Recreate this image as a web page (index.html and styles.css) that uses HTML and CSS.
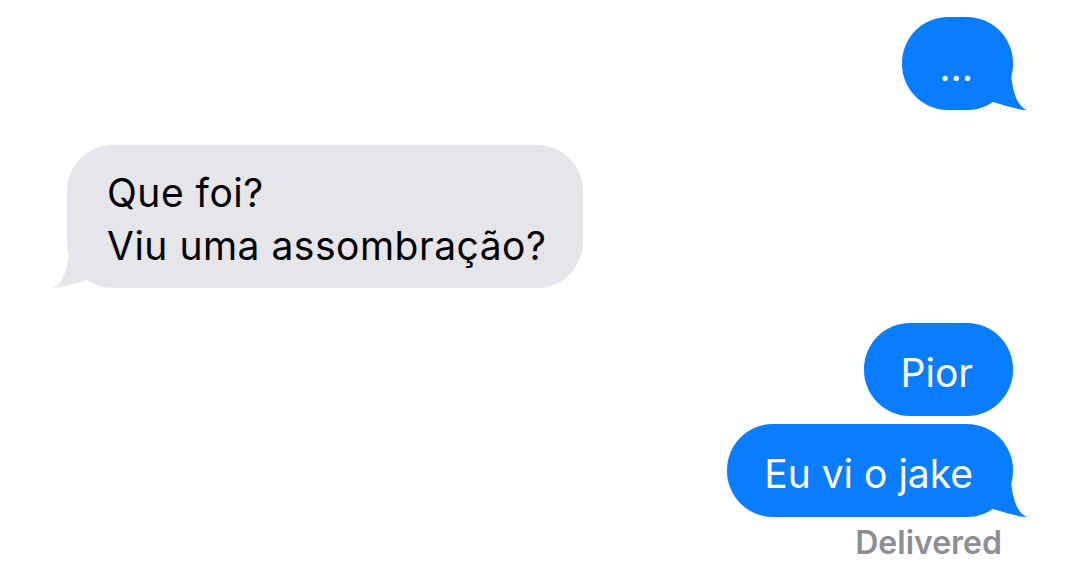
FILE: index.html
```html
<!DOCTYPE html>
<html lang="pt">
<head>
  <meta charset="UTF-8">
  <title>Messages</title>
  <link rel="stylesheet" href="styles.css">
</head>
<body>

  <div class="thread">

    <!-- typing / dots message -->
    <div class="group out">
      <div class="bubble tail">...
        <svg class="tail-shape" viewBox="0 0 45 40"><path d="M28 4 C30 26 36 37 44 40 C36 40 24 36 10 32 L10 4 Z"/></svg>
      </div>
    </div>

    <div class="group in">
      <div class="bubble tail">Que foi?<br>Viu uma assombração?
        <svg class="tail-shape" viewBox="0 0 45 40"><path d="M28 4 C30 26 36 37 44 40 C36 40 24 36 10 32 L10 4 Z"/></svg>
      </div>
    </div>

    <div class="group out">
      <div class="bubble">Pior</div>
      <div class="bubble tail">Eu vi o jake
        <svg class="tail-shape" viewBox="0 0 45 40"><path d="M28 4 C30 26 36 37 44 40 C36 40 24 36 10 32 L10 4 Z"/></svg>
      </div>
      <div class="status">Delivered</div>
    </div>

  </div>

</body>
</html>
```

FILE: styles.css
```css
body {
  margin: 0;
  background: #fff;
  font-family: Inter, "Noto Sans", sans-serif;
}

.thread {
  display: flex;
  flex-direction: column;
  gap: 35px;
  padding: 17px 67px 0 67px;
}

.group {
  display: flex;
  flex-direction: column;
  gap: 8px;
}

.group.out {
  align-items: flex-end;
}

.group.in {
  align-items: flex-start;
}

.bubble {
  position: relative;
  font-size: 39px;
  line-height: 53px;
  border-radius: 46px;
  padding: 23px 40px 17px 37px;
}

.out .bubble {
  background: #0a7cff;
  color: #fff;
}

.in .bubble {
  background: #e5e5ea;
  color: #000;
  letter-spacing: 0.5px;
  padding: 21px 37px 16px 40px;
}

/* little tail under the last bubble of a group */
.tail-shape {
  position: absolute;
  bottom: 0;
  width: 45px;
  height: 40px;
}

.out .tail-shape {
  right: -15px;
  fill: #0a7cff;
}

.in .tail-shape {
  left: -15px;
  fill: #e5e5ea;
  transform: scaleX(-1);
}

.status {
  margin: 0 11px 0 0;
  font-size: 32px;
  font-weight: 600;
  line-height: 36px;
  color: #8e8e93;
}
```
